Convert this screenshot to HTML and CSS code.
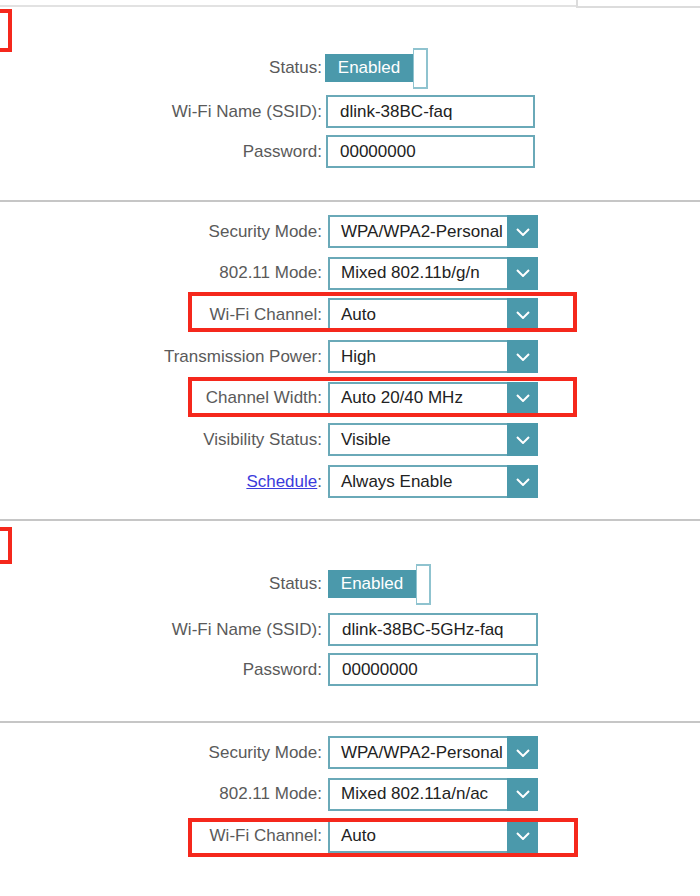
FILE: index.html
```html
<!DOCTYPE html>
<html>
<head>
<meta charset="utf-8">
<link rel="stylesheet" href="styles.css">
</head>
<body>
<div class="topbar">
  <div class="topbar-line"></div>
  <div class="topbar-tab"></div>
</div>

<section class="sec sec-basic sec-first">
  <div class="mark mark-first"></div>
  <div class="form">
    <div class="row row-toggle">
      <span class="label">Status:</span>
      <div class="toggle"><span class="toggle-on">Enabled</span><span class="toggle-knob"></span></div>
    </div>
    <div class="row">
      <span class="label">Wi-Fi Name (SSID):</span>
      <div class="field">dlink-38BC-faq</div>
    </div>
    <div class="row">
      <span class="label">Password:</span>
      <div class="field">00000000</div>
    </div>
  </div>
</section>

<section class="sec sec-adv">
  <div class="hl hl-a"></div>
  <div class="hl hl-b"></div>
  <div class="form form-adv">
    <div class="row"><span class="label">Security Mode:</span><div class="select"><span class="val">WPA/WPA2-Personal</span><span class="arrow"><svg viewBox="0 0 14 8" width="14" height="8"><path d="M1 1 L7 7 L13 1" fill="none" stroke="#fff" stroke-width="2"/></svg></span></div></div>
    <div class="row"><span class="label">802.11 Mode:</span><div class="select"><span class="val">Mixed 802.11b/g/n</span><span class="arrow"><svg viewBox="0 0 14 8" width="14" height="8"><path d="M1 1 L7 7 L13 1" fill="none" stroke="#fff" stroke-width="2"/></svg></span></div></div>
    <div class="row"><span class="label">Wi-Fi Channel:</span><div class="select"><span class="val">Auto</span><span class="arrow"><svg viewBox="0 0 14 8" width="14" height="8"><path d="M1 1 L7 7 L13 1" fill="none" stroke="#fff" stroke-width="2"/></svg></span></div></div>
    <div class="row"><span class="label">Transmission Power:</span><div class="select"><span class="val">High</span><span class="arrow"><svg viewBox="0 0 14 8" width="14" height="8"><path d="M1 1 L7 7 L13 1" fill="none" stroke="#fff" stroke-width="2"/></svg></span></div></div>
    <div class="row"><span class="label">Channel Width:</span><div class="select"><span class="val">Auto 20/40 MHz</span><span class="arrow"><svg viewBox="0 0 14 8" width="14" height="8"><path d="M1 1 L7 7 L13 1" fill="none" stroke="#fff" stroke-width="2"/></svg></span></div></div>
    <div class="row"><span class="label">Visibility Status:</span><div class="select"><span class="val">Visible</span><span class="arrow"><svg viewBox="0 0 14 8" width="14" height="8"><path d="M1 1 L7 7 L13 1" fill="none" stroke="#fff" stroke-width="2"/></svg></span></div></div>
    <div class="row"><span class="label"><a class="link" href="#">Schedule</a>:</span><div class="select"><span class="val">Always Enable</span><span class="arrow"><svg viewBox="0 0 14 8" width="14" height="8"><path d="M1 1 L7 7 L13 1" fill="none" stroke="#fff" stroke-width="2"/></svg></span></div></div>
  </div>
</section>

<section class="sec sec-basic sec-second">
  <div class="mark mark-second"></div>
  <div class="form">
    <div class="row row-toggle">
      <span class="label">Status:</span>
      <div class="toggle"><span class="toggle-on">Enabled</span><span class="toggle-knob"></span></div>
    </div>
    <div class="row">
      <span class="label">Wi-Fi Name (SSID):</span>
      <div class="field">dlink-38BC-5GHz-faq</div>
    </div>
    <div class="row">
      <span class="label">Password:</span>
      <div class="field">00000000</div>
    </div>
  </div>
</section>

<section class="sec sec-adv sec-last">
  <div class="hl hl-c"></div>
  <div class="form form-adv">
    <div class="row"><span class="label">Security Mode:</span><div class="select"><span class="val">WPA/WPA2-Personal</span><span class="arrow"><svg viewBox="0 0 14 8" width="14" height="8"><path d="M1 1 L7 7 L13 1" fill="none" stroke="#fff" stroke-width="2"/></svg></span></div></div>
    <div class="row"><span class="label">802.11 Mode:</span><div class="select"><span class="val">Mixed 802.11a/n/ac</span><span class="arrow"><svg viewBox="0 0 14 8" width="14" height="8"><path d="M1 1 L7 7 L13 1" fill="none" stroke="#fff" stroke-width="2"/></svg></span></div></div>
    <div class="row"><span class="label">Wi-Fi Channel:</span><div class="select"><span class="val">Auto</span><span class="arrow"><svg viewBox="0 0 14 8" width="14" height="8"><path d="M1 1 L7 7 L13 1" fill="none" stroke="#fff" stroke-width="2"/></svg></span></div></div>
  </div>
</section>
</body>
</html>
```

FILE: styles.css
```css
html, body {
  margin: 0;
  padding: 0;
  background: #fff;
  overflow: hidden;
}
body {
  width: 700px;
  height: 896px;
  font-family: "Liberation Sans", Arial, sans-serif;
  font-size: 17px;
  color: #222;
}

.topbar {
  display: flex;
  height: 8px;
}
.topbar-line {
  flex: 1;
  height: 5px;
  border-bottom: 2px solid #e2e2e2;
}
.topbar-tab {
  width: 122px;
  height: 6px;
  border-left: 2px solid #dcdcdc;
  border-bottom: 2px solid #dcdcdc;
}

.sec {
  position: relative;
  border-bottom: 2px solid #c6c6c6;
}
.sec-first {
  padding: 40px 0 32px;
}
.sec-second {
  padding: 43px 0 35px;
}
.sec-second .row-toggle {
  margin-bottom: 2px;
}
.sec-adv {
  padding: 13px 0 21px;
}
.sec-last {
  border-bottom: none;
  height: 160px;
  box-sizing: border-box;
}

.form {
  display: flex;
  flex-direction: column;
  gap: 7px;
}
.form-adv {
  gap: 8.7px;
}

.row {
  display: grid;
  grid-template-columns: 322px 210px;
  column-gap: 6px;
  align-items: center;
  height: 33px;
}
.row-toggle {
  height: 40px;
}
.sec-first .row {
  grid-template-columns: 322px 209px;
  column-gap: 4px;
}
.sec-first .row-toggle {
  column-gap: 3px;
}

.label {
  text-align: right;
  color: #5a5a5a;
  white-space: nowrap;
}
.link {
  color: #3b3bdc;
  text-decoration: underline;
}

.toggle {
  display: flex;
  align-items: center;
  height: 40px;
}
.toggle-on {
  display: flex;
  align-items: center;
  justify-content: center;
  width: 88px;
  height: 28px;
  background: #4b99ab;
  color: #fff;
  font-size: 17px;
}
.toggle-knob {
  width: 12px;
  height: 37px;
  border: 2px solid #8fc3cf;
  border-left-width: 1px;
  background: #fff;
}

.field {
  box-sizing: border-box;
  height: 33px;
  border: 2px solid #6aa9b8;
  padding: 0 12px;
  display: flex;
  align-items: center;
  color: #222;
}

.select {
  box-sizing: border-box;
  height: 33px;
  border: 2px solid #6aa9b8;
  border-right: none;
  display: flex;
  align-items: center;
  position: relative;
  color: #222;
}
.val {
  flex: 1;
  padding-left: 11px;
  white-space: nowrap;
  overflow: hidden;
}
.arrow {
  width: 31px;
  align-self: stretch;
  margin: -2px 0;
  background: #4b99ab;
  display: flex;
  align-items: center;
  justify-content: center;
}

.mark {
  position: absolute;
  left: -20px;
  width: 24px;
  border: 4px solid #f5281c;
}
.mark-first {
  top: 1px;
  height: 35px;
}
.mark-second {
  top: 6px;
  height: 29px;
}

.hl {
  position: absolute;
  left: 188px;
  width: 381px;
  height: 32px;
  border: 4px solid #f5281c;
  z-index: 2;
}
.hl-a {
  top: 90px;
}
.hl-b {
  top: 175px;
}
.hl-c {
  top: 95px;
  width: 382px;
  height: 31px;
}
```
